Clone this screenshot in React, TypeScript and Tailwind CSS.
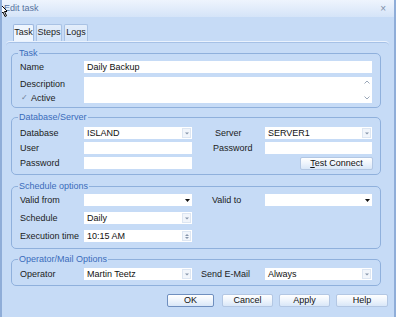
import React from 'react'

const font = "font-['Liberation_Sans',Arial,sans-serif]"

function Arrow({ dark }: { dark?: boolean }) {
  if (dark) {
    return (
      <div className="w-[10px] h-full flex items-center justify-center">
        <svg width="5" height="3" viewBox="0 0 5 3">
          <path d="M0 0h5L2.5 3z" fill="#111" />
        </svg>
      </div>
    )
  }
  return (
    <div className="w-[9px] h-[10px] mr-[1px] bg-[#f1f5fb] border border-[#dde6f2] flex items-center justify-center">
      <svg width="4" height="3" viewBox="0 0 4 3">
        <path d="M0 0.5h4L2 2.5z" fill="#8796ab" />
      </svg>
    </div>
  )
}

function Field({ w, value, kind }: { w: string; value?: string; kind?: 'combo' | 'date' | 'spin' }) {
  return (
    <div className={`${w} h-[12px] bg-white flex items-center`}>
      <span className="flex-1 pl-[3px] leading-[12px] text-[#111] truncate">{value}</span>
      {kind === 'combo' && <Arrow />}
      {kind === 'date' && <Arrow dark />}
      {kind === 'spin' && (
        <div className="w-[9px] h-[10px] mr-[1px] bg-[#f1f5fb] border border-[#dde6f2] flex flex-col items-center justify-center gap-[1px]">
          <svg width="4" height="2" viewBox="0 0 4 2"><path d="M0 2h4L2 0z" fill="#8796ab" /></svg>
          <svg width="4" height="2" viewBox="0 0 4 2"><path d="M0 0h4L2 2z" fill="#8796ab" /></svg>
        </div>
      )}
    </div>
  )
}

function Group({ title, children, className }: { title: string; children: React.ReactNode; className: string }) {
  return (
    <fieldset className={`w-[370px] ml-[5px] border border-[#8fb0dc] rounded-[5px] ${className}`}>
      <legend className="ml-[6px] px-[1px] leading-[12px] text-[#3a6cbb]">{title}</legend>
      {children}
    </fieldset>
  )
}

function Label({ children, w = 'w-[64px]' }: { children: React.ReactNode; w?: string }) {
  return <div className={`${w} shrink-0 leading-[12px] text-[#1c1c1c]`}>{children}</div>
}

function Btn({ children, w, def }: { children: React.ReactNode; w: string; def?: boolean }) {
  return (
    <button
      className={`${w} h-[13px] rounded-[2px] border ${def ? 'border-[#6f8fbf]' : 'border-[#b3c7e3]'} bg-gradient-to-b from-[#ffffff] via-[#eef4fc] to-[#d9e7f8] leading-[11px] text-[#111] text-center`}
    >
      {children}
    </button>
  )
}

export default function App() {
  return (
    <div className={`${font} relative text-[9px] w-[396px] h-[317px] overflow-hidden bg-[#c6dbf6] border-l-2 border-r-2 border-[#8fadd8] flex flex-col`}>
      {/* mouse pointer captured in the shot */}
      <svg className="absolute left-[-2px] top-[4px]" width="7" height="14" viewBox="0 0 7 14">
        <path d="M0.5 0.5v10l2.5-2.5 2 4.5 1.5-0.7-2-4.3h3z" fill="#fff" stroke="#000" strokeWidth="1" />
      </svg>

      <div className="h-[17px] shrink-0 bg-gradient-to-b from-[#eef4fd] to-[#d5e4f8] flex items-center justify-between px-[2px]">
        <span className="text-[#56729e] text-[9px]">Edit task</span>
        <span className="text-[#7d8ea8] text-[10px] mr-[6px]">×</span>
      </div>

      <div className="mt-[7px] ml-[11px] flex gap-[2px] h-[17px] items-stretch">
        <div className="w-[21px] bg-[#eef5fe] border border-b-0 border-[#9db8df] rounded-t-[2px] flex items-center justify-center text-[#1c1c1c]">Task</div>
        <div className="w-[26px] bg-gradient-to-b from-[#e4eefb] to-[#d2e3f8] border border-b-0 border-[#a9c2e4] rounded-t-[2px] flex items-center justify-center text-[#1c1c1c]">Steps</div>
        <div className="w-[24px] bg-gradient-to-b from-[#e4eefb] to-[#d2e3f8] border border-b-0 border-[#a9c2e4] rounded-t-[2px] flex items-center justify-center text-[#1c1c1c]">Logs</div>
      </div>

      <div className="ml-[4px] w-[383px] flex-1 border-t border-[#eaf2fd] rounded-t-[4px] shadow-[inset_0_1px_0_#a6c1e6] pt-[5px]">
        <Group title="Task" className="pt-[2px] pb-[3px]">
          <div className="flex pl-[8px]">
            <Label>Name</Label>
            <Field w="w-[288px]" value="Daily Backup" />
          </div>
          <div className="flex pl-[8px] mt-[4px]">
            <div className="w-[64px] shrink-0 leading-[12px] text-[#1c1c1c]">
              <div className="mt-[1px]">Description</div>
              <div className="flex items-center gap-[3px] mt-[2px] pl-[1px]">
                <span className="text-[#6d7f99] text-[8px]">✓</span>
                <span>Active</span>
              </div>
            </div>
            <div className="w-[288px] h-[26px] bg-white flex justify-end">
              <div className="w-[8px] mr-[1px] flex flex-col justify-between py-[3px] items-center">
                <svg width="6" height="4" viewBox="0 0 6 4"><path d="M0.5 3.5L3 1l2.5 2.5" stroke="#9aa7b8" fill="none" /></svg>
                <svg width="6" height="4" viewBox="0 0 6 4"><path d="M0.5 0.5L3 3l2.5-2.5" stroke="#9aa7b8" fill="none" /></svg>
              </div>
            </div>
          </div>
        </Group>

        <Group title="Database/Server" className="mt-[3px] pt-[4px] pb-[4px]">
          <div className="flex flex-col gap-[3px] pl-[8px]">
            <div className="flex">
              <Label>Database</Label>
              <Field w="w-[108px]" value="ISLAND" kind="combo" />
              <div className="w-[23px]" />
              <Label w="w-[50px]">Server</Label>
              <Field w="w-[107px]" value="SERVER1" kind="combo" />
            </div>
            <div className="flex">
              <Label>User</Label>
              <Field w="w-[108px]" />
              <div className="w-[21px]" />
              <Label w="w-[52px]">Password</Label>
              <Field w="w-[107px]" />
            </div>
            <div className="flex">
              <Label>Password</Label>
              <Field w="w-[108px]" />
              <div className="w-[108px]" />
              <Btn w="w-[73px]">
                <span className="underline">T</span>est Connect
              </Btn>
            </div>
          </div>
        </Group>

        <Group title="Schedule options" className="mt-[5px] pt-[2px] pb-[6px]">
          <div className="flex flex-col gap-[6px] pl-[8px]">
            <div className="flex">
              <Label>Valid from</Label>
              <Field w="w-[108px]" kind="date" />
              <div className="w-[20px]" />
              <Label w="w-[53px]">Valid to</Label>
              <Field w="w-[107px]" kind="date" />
            </div>
            <div className="flex">
              <Label>Schedule</Label>
              <Field w="w-[108px]" value="Daily" kind="combo" />
            </div>
            <div className="flex">
              <Label>Execution time</Label>
              <Field w="w-[108px]" value="10:15 AM" kind="spin" />
            </div>
          </div>
        </Group>

        <Group title="Operator/Mail Options" className="mt-[4px] pt-[3px] pb-[5px]">
          <div className="flex pl-[8px]">
            <Label>Operator</Label>
            <Field w="w-[108px]" value="Martin Teetz" kind="combo" />
            <div className="w-[9px]" />
            <Label>Send E-Mail</Label>
            <Field w="w-[107px]" value="Always" kind="combo" />
          </div>
        </Group>

        <div className="mt-[8px] flex justify-end pr-[1px]">
          <Btn w="w-[47px]" def>OK</Btn>
          <div className="w-[8px]" />
          <Btn w="w-[51px]">Cancel</Btn>
          <div className="w-[6px]" />
          <Btn w="w-[51px]">Apply</Btn>
          <div className="w-[6px]" />
          <Btn w="w-[52px]">Help</Btn>
        </div>
      </div>
    </div>
  )
}
